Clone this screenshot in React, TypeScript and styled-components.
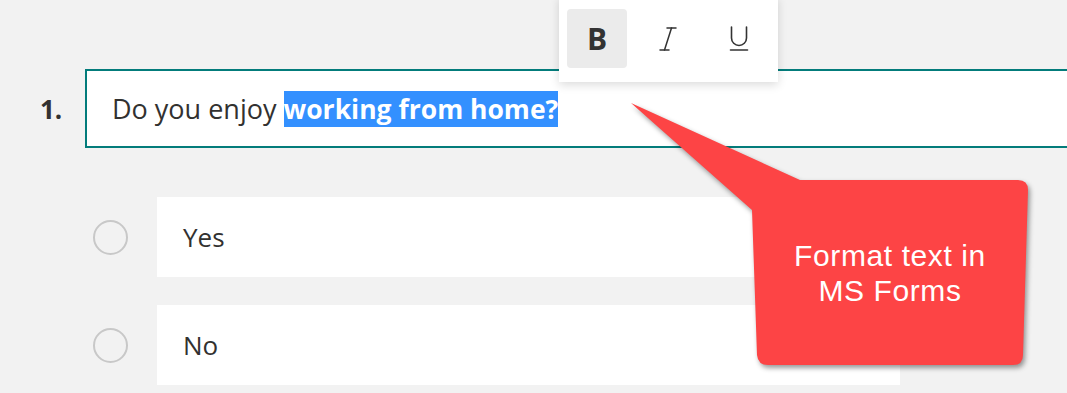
import React from "react"
import styled, { createGlobalStyle } from "styled-components"

const GlobalStyle = createGlobalStyle`
  html, body {
    margin: 0;
    padding: 0;
    background: #f2f2f2;
  }
  body {
    font-family: "Open Sans", "Noto Sans", sans-serif;
    color: #323130;
  }
`

const options = ["Yes", "No"]

const App = () => {
  return (
    <Page>
      <GlobalStyle />
      <QuestionRow>
        <Number>1.</Number>
        <QuestionBox>
          <span>Do you enjoy </span>
          <Selected>working from home?</Selected>
        </QuestionBox>
      </QuestionRow>

      <Options>
        {options.map((label) => (
          <OptionRow key={label}>
            <Radio />
            <OptionBox>{label}</OptionBox>
          </OptionRow>
        ))}
      </Options>

      <Toolbar>
        <ToolButton $active>
          <BoldGlyph>B</BoldGlyph>
        </ToolButton>
        <ToolButton>
          <svg width="18" height="24" viewBox="0 0 18 24" fill="none" stroke="#333" strokeWidth="1.5" strokeLinecap="round">
            <path d="M8 0.9 H17" />
            <path d="M1 23.1 H10" />
            <path d="M12.5 0.9 L5.5 23.1" />
          </svg>
        </ToolButton>
        <ToolButton>
          <svg width="20" height="25" viewBox="0 0 20 25" fill="none" stroke="#333" strokeWidth="1.6" strokeLinecap="round">
            <path d="M2.5 1 V12 a7.5 7.5 0 0 0 15 0 V1" />
            <path d="M1.5 24 H18.5" />
          </svg>
        </ToolButton>
      </Toolbar>

      <CalloutShape viewBox="620 90 430 290" width="430" height="290">
        <path
          d="M631 103 L800 180 L1018 180 Q1028 180 1028 190 L1023 355 Q1023 365 1013 365 L768 365 Q758 365 757 355 L752 210 Z"
          fill="#fd4445"
        />
      </CalloutShape>
      <CalloutText>
        Format text in
        <br />
        MS Forms
      </CalloutText>
    </Page>
  )
}

const Page = styled.div`
  position: relative;
  width: 1067px;
  height: 393px;
  overflow: hidden;
  padding-top: 69px;
  box-sizing: border-box;
`

const QuestionRow = styled.div`
  display: flex;
  align-items: center;
`

const Number = styled.div`
  width: 85px;
  padding-left: 40px;
  box-sizing: border-box;
  font-size: 26px;
  font-weight: 700;
  color: #323130;
`

const QuestionBox = styled.div`
  flex: 1;
  height: 79px;
  margin-right: -12px;
  box-sizing: border-box;
  border: 2px solid #037c7b;
  background: #fff;
  display: flex;
  align-items: center;
  padding-left: 25px;
  font-size: 27px;
  color: #323130;
  white-space: pre;
`

const Selected = styled.span`
  background: #3390ff;
  color: #fff;
  font-weight: 700;
  font-size: 26.5px;
`

const Options = styled.div`
  display: flex;
  flex-direction: column;
  gap: 28px;
  margin-top: 49px;
`

const OptionRow = styled.div`
  display: flex;
  align-items: center;
  padding-left: 93px;
`

const Radio = styled.div`
  width: 35px;
  height: 35px;
  box-sizing: border-box;
  border: 2px solid #c8c8c8;
  border-radius: 50%;
  margin-right: 29px;
`

const OptionBox = styled.div`
  width: 743px;
  height: 80px;
  background: #fff;
  display: flex;
  align-items: center;
  padding-left: 26px;
  box-sizing: border-box;
  font-size: 26px;
  color: #323130;
`

const Toolbar = styled.div`
  position: absolute;
  left: 559px;
  top: -4px;
  display: flex;
  gap: 11px;
  padding: 13px 9px 14px 8px;
  background: #fff;
  box-shadow: 0 3px 9px rgba(0, 0, 0, 0.14);
`

const ToolButton = styled.div<{ $active?: boolean }>`
  width: 60px;
  height: 59px;
  display: flex;
  align-items: center;
  justify-content: center;
  border-radius: 4px;
  background: ${(p) => (p.$active ? "#ebebeb" : "transparent")};
`

const BoldGlyph = styled.span`
  font-size: 30px;
  font-weight: 700;
  color: #333;
  line-height: 1;
`

const CalloutShape = styled.svg`
  position: absolute;
  left: 620px;
  top: 90px;
  filter: drop-shadow(2px 3px 2.5px rgba(0, 0, 0, 0.4));
`

const CalloutText = styled.div`
  position: absolute;
  left: 754px;
  top: 180px;
  width: 272px;
  height: 185px;
  display: flex;
  align-items: center;
  justify-content: center;
  text-align: center;
  font-family: "Liberation Sans", Arial, sans-serif;
  font-size: 30px;
  letter-spacing: 0.6px;
  line-height: 35px;
  color: #fff;
`

export default App
